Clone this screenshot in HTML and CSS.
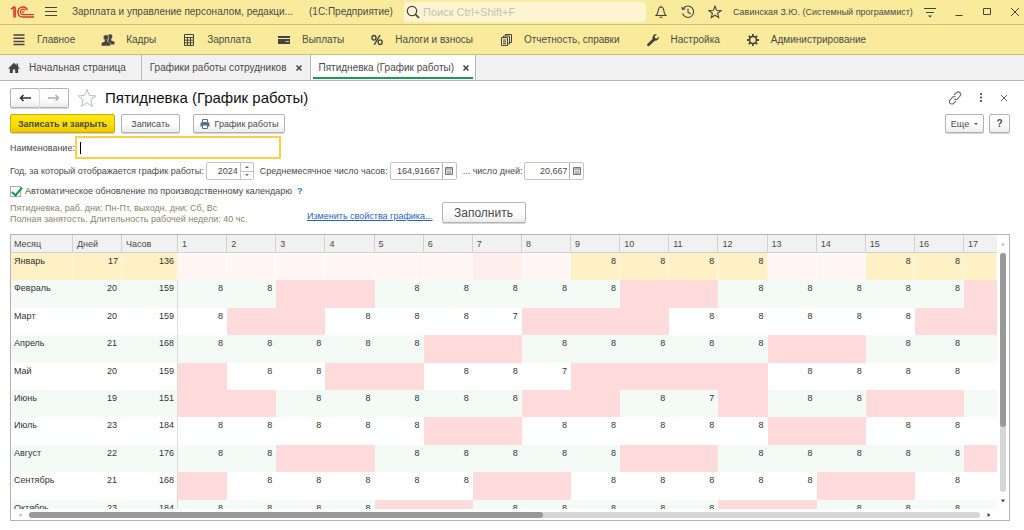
FILE: index.html
```html
<!DOCTYPE html>
<html lang="ru">
<head>
<meta charset="utf-8">
<title>Пятидневка (График работы)</title>
<link rel="stylesheet" href="styles.css">
</head>
<body>
<header class="titlebar">
  <svg class="logo" width="24" height="14" viewBox="0 0 24 14" fill="none" stroke="#d8342c">
    <path d="M1 4.200 4 2v10.500" stroke-width="1.500"/>
    <path d="M5.600 2v10.500" stroke-width="1"/>
    <path d="M17.500 5A5 5 0 1 0 13 12h11" stroke-width="1.400"/>
    <path d="M15.400 5.400A2.800 2.800 0 1 0 13 9.700h11" stroke-width="1.200"/>
    <circle cx="13" cy="7" r="1" stroke-width=".8"/>
  </svg>
  <button class="plain burger" aria-label="Меню"><svg width="12" height="12" viewBox="0 0 12 12" stroke="#444" stroke-width="1"><path d="M0 1.500h12M0 5.500h12M0 9.500h12"/></svg></button>
  <span class="app-name">Зарплата и управление персоналом, редакци...</span>
  <span class="platform">(1С:Предприятие)</span>
  <label class="search">
    <svg width="14" height="14" viewBox="0 0 14 14" fill="none" stroke="#444" stroke-width="1.200"><circle cx="6" cy="6" r="4.700"/><path d="M9.400 9.400 13 12.800" stroke-width="1.600"/></svg>
    <input type="text" placeholder="Поиск Ctrl+Shift+F" aria-label="Поиск">
  </label>
  <div class="tools">
    <button class="plain" aria-label="Уведомления"><svg width="14" height="14" viewBox="0 0 14 14" fill="none" stroke="#444" stroke-width="1.100"><path d="M2 10.500h10L10.500 8.500 9.500 4.500Q9 2 7 2T4.500 4.500L3.500 8.500zM7 2V.8M5.500 12.200h3"/></svg></button>
    <button class="plain" aria-label="История"><svg width="14" height="14" viewBox="0 0 14 14" fill="none" stroke="#444" stroke-width="1.100"><path d="M2.200 3.500A5.700 5.700 0 1 1 1.500 8.500M.8 1.800l.8 2.600 2.700-.4M7 3.500V7.200l2.600 1.800"/></svg></button>
    <button class="plain" aria-label="Избранное"><svg width="14" height="14" viewBox="0 0 14 14" fill="none" stroke="#444" stroke-width="1.100"><path d="M7 1.200 8.600 5.200 13 5.500 9.600 8.300 10.700 12.600 7 10.200 3.300 12.600 4.400 8.300 1 5.500 5.400 5.200z"/></svg></button>
  </div>
  <span class="user">Савинская З.Ю. (Системный программист)</span>
  <div class="win">
    <button class="plain" aria-label="Настройки панели"><svg width="12" height="12" viewBox="0 0 12 12" stroke="#444"><path d="M0 2.500h12M2 6.500h8"/><path d="M4 9.500h4L6 11.500z" fill="#333" stroke="none"/></svg></button>
    <button class="plain" aria-label="Свернуть"><svg width="10" height="10" viewBox="0 0 10 10" stroke="#444"><path d="M1.500 8.500h7"/></svg></button>
    <button class="plain" aria-label="Развернуть"><svg width="10" height="10" viewBox="0 0 10 10" fill="none" stroke="#444"><path d="M1.500 1.500h7v6h-7z"/></svg></button>
    <button class="plain" aria-label="Закрыть"><svg width="10" height="10" viewBox="0 0 10 10" stroke="#444"><path d="M1 1l8 8M9 1 1 9"/></svg></button>
  </div>
</header>

<nav class="menu">
  <a href="#"><svg width="14" height="14" viewBox="0 0 14 14" stroke="#444" stroke-width="1.500"><path d="M1.500 2h11M1.500 5.200h11M1.500 8.400h11M1.500 11.600h11"/></svg>Главное</a>
  <a href="#"><svg width="14" height="14" viewBox="0 0 14 14" fill="#444"><circle cx="9" cy="3.600" r="2.400"/><path d="M7.800 5h2.400v2.500l3.300 1.300v2.700H9.500V9.800L7 8.500z"/><circle cx="5" cy="4.500" r="2.800" stroke="#faeb9c" stroke-width=".6"/><path d="M3.800 6.500h2.500v2l3 1.500v2.800H.6V10l3.200-1.500z"/></svg>Кадры</a>
  <a href="#"><svg width="14" height="14" viewBox="0 0 14 14" fill="none" stroke="#444"><path d="M2.500 1.500h9v11h-9zM2.500 4.500h9M5.500 4.500v8M8.500 4.500v8M2.500 7.200h9M2.500 9.800h9"/></svg>Зарплата</a>
  <a href="#"><svg width="14" height="14" viewBox="0 0 14 14" fill="#444"><path d="M1 3h12v2H1zM1 6h12v5H1z"/><path d="M8.500 8.200h3.500v.8H8.500z" fill="#faeb9c"/></svg>Выплаты</a>
  <a href="#"><svg width="14" height="14" viewBox="0 0 14 14" fill="none" stroke="#444" stroke-width="1.400"><ellipse cx="4" cy="4.800" rx="2" ry="2.300"/><ellipse cx="10.200" cy="9.200" rx="2" ry="2.300"/><path d="M10 2.200 4.200 11.800"/></svg>Налоги и взносы</a>
  <a href="#"><svg width="14" height="14" viewBox="0 0 14 14" fill="none" stroke="#444" stroke-width="1"><path d="M2.500 4.500h6v8h-6zM4.500 4.500v-1.500h6v8H8.500M6.500 3V1.500h6v8h-2M4 7h3M4 8.800h3M4 10.600h3"/></svg>Отчетность, справки</a>
  <a href="#"><svg width="14" height="14" viewBox="0 0 14 14"><path d="M2.500 11.800 8 6.500" stroke="#444" stroke-width="2.800" stroke-linecap="round"/><path d="M10.800 1.200A3.600 3.600 0 0 0 6.500 5.500L8.600 7.700A3.700 3.700 0 0 0 12.900 3.600L10.800 5.500 9 5 8.800 3.200z" fill="#444"/></svg>Настройка</a>
  <a href="#"><svg width="14" height="14" viewBox="0 0 14 14" fill="none" stroke="#444"><circle cx="7" cy="7" r="3.400" stroke-width="1.500"/><path d="M7 1v2.500M7 10.500V13M1 7h2.500M10.500 7H13M2.800 2.800l1.700 1.700M9.500 9.500l1.700 1.700M11.200 2.800 9.500 4.500M4.500 9.500l-1.700 1.700" stroke-width="1.800"/></svg>Администрирование</a>
</nav>

<div class="tabs">
  <a href="#" class="tab home"><svg width="12" height="12" viewBox="0 0 12 12" fill="#444"><path d="M6 .8 0 6.500h1.800V11h3V7.500h2.400V11h3V6.500H12L10 4.600V1.500H8.600v1.800z"/></svg>Начальная страница</a>
  <a href="#" class="tab">Графики работы сотрудников<svg width="8" height="8" viewBox="0 0 8 8" stroke="#444" stroke-width="1.500"><path d="M1.500 1.500l5 5M6.500 1.500l-5 5"/></svg></a>
  <a href="#" class="tab active"><span class="tab-in">Пятидневка (График работы)<svg width="8" height="8" viewBox="0 0 8 8" stroke="#444" stroke-width="1.500"><path d="M1.500 1.500l5 5M6.500 1.500l-5 5"/></svg></span></a>
</div>

<main class="form">
  <div class="head">
    <div class="nav-pair">
      <button class="btn" aria-label="Назад"><svg width="12" height="8" viewBox="0 0 12 8" fill="none" stroke="#333" stroke-width="1.600"><path d="M12 4H1.500M4.500 1l-3 3 3 3"/></svg></button>
      <button class="btn" aria-label="Вперед"><svg width="12" height="8" viewBox="0 0 12 8" fill="none" stroke="#aaa" stroke-width="1.300"><path d="M0 4h10.500M7.500 1l3 3-3 3"/></svg></button>
    </div>
    <button class="plain" aria-label="В избранное"><svg width="20" height="20" viewBox="0 0 20 20" fill="none" stroke="#b5bcc2" stroke-width="1"><path d="M10 1.500 12.300 7.500 18.800 7.900 13.800 12 15.500 18.300 10 14.800 4.500 18.300 6.200 12 1.200 7.900 7.700 7.500z"/></svg></button>
    <h1>Пятидневка (График работы)</h1>
    <div class="head-tools">
      <button class="plain" aria-label="Ссылка"><svg width="14" height="14" viewBox="0 0 14 14" fill="none" stroke="#666" stroke-width="1.100"><path d="M6 4 8.500 1.700a2.300 2.300 0 0 1 3.500 3.300L9.500 7.800A2.300 2.300 0 0 1 6.500 8M8 10 5.500 12.300A2.300 2.300 0 0 1 2 9L4.500 6.200A2.300 2.300 0 0 1 7.500 6"/></svg></button>
      <button class="plain" aria-label="Еще действия"><svg width="4" height="10" viewBox="0 0 4 10" fill="#666"><path d="M1 0h2v2H1zM1 3.500h2v2H1zM1 7h2v2H1z"/></svg></button>
      <button class="plain" aria-label="Закрыть форму"><svg width="8" height="8" viewBox="0 0 8 8" stroke="#666" stroke-width="1"><path d="M1 1l6 6M7 1 1 7"/></svg></button>
    </div>
  </div>

  <div class="commands">
    <button class="btn primary">Записать и закрыть</button>
    <button class="btn save">Записать</button>
    <button class="btn print"><svg width="10" height="10" viewBox="0 0 10 10"><path d="M2.500.5h5v3h-5z" fill="#fff" stroke="#51708c"/><path d="M.5 3.500h9v4h-9z" fill="#51708c"/><path d="M2.500 6h5v3.500h-5z" fill="#fff" stroke="#51708c"/></svg>График работы</button>
    <button class="btn more">Еще<span class="caret"></span></button>
    <button class="btn help">?</button>
  </div>

  <div class="row name-row">
    <label for="name">Наименование:</label>
    <div class="name-box"><input id="name" type="text" autofocus></div>
  </div>

  <div class="row year-row">
    <label for="year">Год, за который отображается график работы:</label>
    <div class="field year"><input id="year" type="text" value="2024"><span class="spin"><button class="plain" aria-label="Больше"><svg width="4" height="2" viewBox="0 0 4 2" fill="#666"><path d="M0 2h4L2 0z"/></svg></button><button class="plain" aria-label="Меньше"><svg width="4" height="2" viewBox="0 0 4 2" fill="#666"><path d="M0 0h4L2 2z"/></svg></button></span></div>
    <label for="hours">Среднемесячное число часов:</label>
    <div class="field hours"><input id="hours" type="text" value="164,91667"><button class="plain calc" aria-label="Калькулятор"><svg width="8" height="8" viewBox="0 0 8 8" fill="none" stroke="#777"><path d="M.5.5h7v7h-7z" fill="#ddd"/><path d="M1 2h6M3 4v3M5 4v3" stroke-width=".8"/></svg></button></div>
    <label for="days">... число дней:</label>
    <div class="field days"><input id="days" type="text" value="20,667"><button class="plain calc" aria-label="Калькулятор"><svg width="8" height="8" viewBox="0 0 8 8" fill="none" stroke="#777"><path d="M.5.5h7v7h-7z" fill="#ddd"/><path d="M1 2h6M3 4v3M5 4v3" stroke-width=".8"/></svg></button></div>
  </div>

  <div class="row auto-row">
    <input id="auto" class="check" type="checkbox" checked>
    <label for="auto">Автоматическое обновление по производственному календарю</label>
    <a href="#" class="hint">?</a>
  </div>

  <div class="row info-row">
    <p class="info">Пятидневка, раб. дни: Пн-Пт, выходн. дни: Сб, Вс<br>Полная занятость. Длительность рабочей недели: 40 чс.</p>
    <a href="#" class="edit">Изменить свойства графика...</a>
    <button class="btn fill">Заполнить</button>
  </div>

  <section class="grid">
    <div class="view">
      <table>
        <colgroup><col class="c-month"><col class="c-days"><col class="c-hours"><col span="16"><col class="c-last"></colgroup>
        <thead><tr><th>Месяц<th>Дней<th>Часов<th>1<th>2<th>3<th>4<th>5<th>6<th>7<th>8<th>9<th>10<th>11<th>12<th>13<th>14<th>15<th>16<th>17</tr></thead>
        <tbody>
        <tr class="cur"><td>Январь<td>17<td>136<td class="p"><td class="p"><td class="p"><td class="p"><td class="p"><td class="p"><td class="h"><td class="p"><td>8<td>8<td>8<td>8<td class="p"><td class="p"><td>8<td>8<td></tr>
        <tr><td>Февраль<td>20<td>159<td>8<td>8<td class="r"><td class="r"><td>8<td>8<td>8<td>8<td>8<td class="r"><td class="r"><td>8<td>8<td>8<td>8<td>8<td class="r"></tr>
        <tr><td>Март<td>20<td>159<td>8<td class="r"><td class="r"><td>8<td>8<td>8<td>7<td class="r"><td class="r"><td class="r"><td>8<td>8<td>8<td>8<td>8<td class="r"><td class="r"></tr>
        <tr><td>Апрель<td>21<td>168<td>8<td>8<td>8<td>8<td>8<td class="r"><td class="r"><td>8<td>8<td>8<td>8<td>8<td class="r"><td class="r"><td>8<td>8<td></tr>
        <tr><td>Май<td>20<td>159<td class="r"><td>8<td>8<td class="r"><td class="r"><td>8<td>8<td>7<td class="r"><td class="r"><td class="r"><td class="r"><td>8<td>8<td>8<td>8<td></tr>
        <tr><td>Июнь<td>19<td>151<td class="r"><td class="r"><td>8<td>8<td>8<td>8<td>8<td class="r"><td class="r"><td>8<td>7<td class="r"><td>8<td>8<td class="r"><td class="r"><td></tr>
        <tr><td>Июль<td>23<td>184<td>8<td>8<td>8<td>8<td>8<td class="r"><td class="r"><td>8<td>8<td>8<td>8<td>8<td class="r"><td class="r"><td>8<td>8<td></tr>
        <tr><td>Август<td>22<td>176<td>8<td>8<td class="r"><td class="r"><td>8<td>8<td>8<td>8<td>8<td class="r"><td class="r"><td>8<td>8<td>8<td>8<td>8<td class="r"></tr>
        <tr><td>Сентябрь<td>21<td>168<td class="r"><td>8<td>8<td>8<td>8<td>8<td class="r"><td class="r"><td>8<td>8<td>8<td>8<td>8<td class="r"><td class="r"><td>8<td></tr>
        <tr><td>Октябрь<td>23<td>184<td>8<td>8<td>8<td>8<td class="r"><td class="r"><td>8<td>8<td>8<td>8<td>8<td class="r"><td class="r"><td>8<td>8<td>8<td></tr>
        </tbody>
      </table>
    </div>
    <div class="vbar"><svg width="6" height="4" viewBox="0 0 6 4" fill="#bbb"><path d="M1 3.500h4L3 .5z"/></svg><div class="track"><div class="thumb"></div></div><svg width="6" height="4" viewBox="0 0 6 4" fill="#444"><path d="M1 .5h4L3 3.500z"/></svg></div>
    <div class="hbar"><svg width="4" height="6" viewBox="0 0 4 6" fill="#bbb"><path d="M3.500 1v4L.5 3z"/></svg><div class="track"><div class="thumb"></div></div><svg width="4" height="6" viewBox="0 0 4 6" fill="#444"><path d="M.5 1v4l3-2z"/></svg></div>
  </section>
</main>
</body>
</html>
```

FILE: styles.css
```css
* { box-sizing: border-box; }
body {
  margin: 0;
  height: 100vh;
  display: flex;
  flex-direction: column;
  overflow: hidden;
  background: #fff;
  color: #4a4a4a;
  font: 9px/12px "Liberation Sans", Arial, sans-serif;
}
button, input { font: inherit; color: inherit; margin: 0; }
a { color: inherit; text-decoration: none; }
svg { display: block; flex: none; }
.plain { border: 0; padding: 0; background: none; display: flex; align-items: center; justify-content: center; }

.titlebar {
  height: 25px;
  flex: none;
  display: flex;
  align-items: center;
  padding: 0 4px 0 10px;
  background: #faeb9c;
  border-bottom: 1px solid #cdbf76;
}
.burger { margin-left: 11px; }
.app-name { margin-left: 15px; font-size: 10px; white-space: nowrap; width: 237px; }
.platform { width: 87px; font-size: 10px; white-space: nowrap; }
.search {
  flex: 1;
  height: 20px;
  margin-left: 8px;
  padding: 0 2px;
  display: flex;
  align-items: center;
  gap: 3px;
  background: #fdf5d2;
  border-radius: 3px;
}
.search input { flex: 1; min-width: 0; border: 0; padding: 0; outline: 0; background: none; font-size: 11px; }
.search input::placeholder { color: #c5c3b8; opacity: 1; }
.tools { display: flex; gap: 13px; margin-left: 8px; }
.user { margin-left: 11px; width: 182px; white-space: nowrap; }
.win { display: flex; align-items: center; gap: 18px; margin-left: 9px; }

.menu {
  height: 30px;
  flex: none;
  display: flex;
  align-items: center;
  padding-left: 12px;
  gap: 26px;
  background: #faeb9c;
  border-bottom: 1px solid #cdbf76;
  font-size: 10px;
}
.menu a { display: flex; align-items: center; gap: 11px; white-space: nowrap; }

.tabs {
  height: 26px;
  flex: none;
  display: flex;
  background: #f1f1f1;
  border-bottom: 1px solid #b9b9b9;
  font-size: 10px;
}
.tab { display: flex; align-items: center; gap: 8px; padding: 0 7px 0 8px; border-right: 1px solid #b9b9b9; white-space: nowrap; }
.tab.home { gap: 9px; padding-right: 15px; }
.tab.active { background: #fff; padding: 0 2px; }
.tab-in { display: flex; align-items: center; gap: 8px; height: 23px; padding: 2px 3px 0 6px; border-bottom: 2px solid #1a9c57; }

.form { flex: 1; min-height: 0; display: flex; flex-direction: column; padding: 6px 14px 9px 10px; }
.btn {
  display: flex;
  align-items: center;
  justify-content: center;
  height: 19px;
  padding: 0;
  border: 1px solid #b3b3b3;
  border-radius: 2px;
  background: linear-gradient(#fff, #fff 50%, #ececec);
  box-shadow: 0 1px 0 #d5d5d5;
  white-space: nowrap;
}
.head { display: flex; align-items: center; height: 21px; }
.nav-pair { display: flex; margin-right: 8px; }
.nav-pair .btn { width: 30px; height: 20px; }
.nav-pair .btn + .btn { border-left-color: #ddd; margin-left: -1px; }
h1 { margin: 0 0 0 8px; font-size: 15px; line-height: 20px; font-weight: 400; color: #111; white-space: nowrap; }
.head-tools { display: flex; align-items: center; gap: 17px; margin: 0 2px 0 auto; }

.commands { display: flex; margin-top: 6px; }
.primary { width: 105px; background: linear-gradient(#ffe61a, #fadb00 60%, #ecc900); border-color: #c9ab00; font-weight: 700; }
.save { width: 59px; margin-left: 6px; }
.print { width: 92px; margin-left: 13px; gap: 5px; }
.more { width: 39px; margin-left: auto; gap: 5px; }
.caret { border: 2px solid transparent; border-top-color: #555; border-bottom: 0; }
.help { width: 21px; margin-left: 5px; font-weight: 700; font-size: 10px; }

.row { display: flex; align-items: center; white-space: nowrap; }
.name-row { height: 23px; margin-top: 3px; }
.name-box { display: flex; align-items: center; width: 206px; height: 23px; padding-left: 3px; border: 2px solid #fbd041; }
.name-box::before { content: ""; width: 1px; height: 12px; background: #000; }
.name-box input { flex: 1; min-width: 0; height: 100%; border: 0; outline: 0; padding: 0; font-size: 12px; color: #000; caret-color: transparent; }
.year-row { height: 18px; margin-top: 3px; }
.field { display: flex; height: 18px; margin: 0 6px 0 2px; border: 1px solid #c4c4c4; border-radius: 2px; }
.field input { flex: 1; min-width: 0; border: 0; outline: 0; padding: 0 2px; background: none; text-align: right; }
.year { width: 48px; }
.hours { width: 67px; }
.days { width: 60px; }
.spin { width: 13px; display: flex; flex-direction: column; border-left: 1px solid #c4c4c4; }
.spin button { flex: 1; }
.spin button + button { border-top: 1px solid #c4c4c4; }
.calc { width: 14px; border-left: 1px solid #b3b3b3; }
.auto-row { height: 12px; margin-top: 5px; }
.check { appearance: none; width: 11px; height: 11px; margin: 0 4px 0 0; border: 1px solid #aaa; position: relative; }
.check:checked::after {
  content: "";
  position: absolute;
  left: 3px;
  top: -2px;
  width: 4px;
  height: 9px;
  border: solid #14984c;
  border-width: 0 2px 2px 0;
  transform: rotate(40deg);
}
.hint { margin-left: 5px; color: #1c7cc0; font-weight: 700; }
.info-row { margin-top: 5px; height: 21px; }
.info { margin: 2px 0 0; width: 297px; line-height: 11px; color: #8a8468; }
.edit { color: #2c64c4; text-decoration: underline; margin-top: 6px; }
.fill { width: 84px; height: 21px; margin-left: 9px; font-size: 12px; }

.grid {
  flex: 1;
  min-height: 0;
  margin-top: 11px;
  display: grid;
  grid-template: minmax(0, 1fr) 11px / minmax(0, 1fr) 12px;
  border: 1px solid #b3b3b3;
}
.view { overflow: hidden; }
table { width: 100%; height: 292px; table-layout: fixed; border-collapse: separate; border-spacing: 0; }
.c-month { width: 62px; }
.c-days { width: 49px; }
.c-hours { width: 56px; }
.c-last { width: 33px; }
th {
  height: 18px;
  padding: 0 4px;
  text-align: left;
  font-weight: 400;
  background: #f1f1f1;
  border-right: 1px solid #d2d2d2;
  border-bottom: 1px solid #d2d2d2;
}
th:last-child { border-right: 0; }
th:first-child, td:first-child { padding-left: 3px; }
td { padding: 2px 4px 0; vertical-align: top; text-align: right; color: #333; }
td:first-child { text-align: left; }
td:nth-child(2) { padding-right: 5px; }
td:nth-child(3) { border-right: 1px solid #ddd; padding-right: 3px; }
tbody tr:nth-child(even) { background: #f4fbf7; }
.cur td { background: #fdf1c5; border-right: 1px solid #fff9e4; padding-right: 3px; }
.cur .p { background: #fff6f5; border-right-color: #fffcfb; }
.cur .h { background: #ffeeee; }
.r { background: #ffdbdb; }
.vbar { display: flex; flex-direction: column; align-items: center; padding: 7px 0 6px; }
.hbar { display: flex; align-items: center; grid-column: 1 / 3; padding: 0 18px 0 7px; }
.track { flex: 1; background: #d6d6d6; border-radius: 3px; }
.thumb { background: #999; border-radius: 3px; }
.vbar .track { width: 6px; margin: 7px 0; }
.vbar .thumb { height: 73%; }
.hbar .track { height: 6px; margin: 0 7px; }
.hbar .thumb { height: 6px; width: 54%; }
```
